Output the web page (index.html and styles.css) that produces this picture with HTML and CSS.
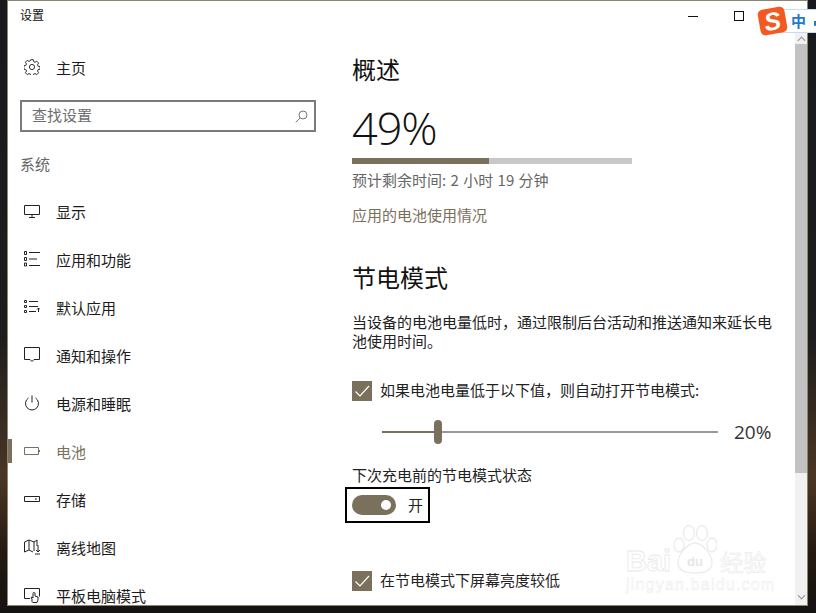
FILE: index.html
```html
<!DOCTYPE html>
<html lang="zh-CN">
<head>
<meta charset="utf-8">
<title>设置</title>
<link rel="stylesheet" href="styles.css">
</head>
<body>
<div class="window">
  <div class="titlebar">
    <span class="title">设置</span>
    <div class="controls">
      <span class="min"></span>
      <span class="max"></span>
    </div>
  </div>
  <div class="body">
    <aside class="side">
      <div class="nav home">
        <svg class="ic" viewBox="0 0 16 16"><g fill="none" stroke="#333" stroke-width="1"><circle cx="8" cy="8" r="2.6"/><path d="M6.700 .7h2.600l.4 2 1.300.6 1.800-1.100 1.800 1.900-1.100 1.700.6 1.400 2 .4v2.600l-2 .4-.6 1.400 1.100 1.700-1.800 1.900-1.800-1.100-1.300.6-.4 2H6.700l-.4-2-1.300-.6-1.800 1.100-1.800-1.900 1.100-1.700-.6-1.400-2-.4V6.700l2-.4.6-1.400-1.100-1.700 1.800-1.900 1.800 1.100 1.300-.6z"/></g></svg>
        <span>主页</span>
      </div>
      <div class="search"><span class="search-text">查找设置</span>
        <svg class="mag" viewBox="0 0 13 13"><g fill="none" stroke="#777" stroke-width="1"><circle cx="8" cy="5" r="4"/><path d="M5 8 .8 12.300"/></g></svg>
      </div>
      <div class="group">系统</div>
      <div class="nav">
        <svg class="ic" viewBox="0 0 16 16"><g fill="none" stroke="#222"><path d="M.5 2.500h15v9H.5zM8 11.500v3M5 14.500h6"/></g></svg>
        <span>显示</span>
      </div>
      <div class="nav">
        <svg class="ic" viewBox="0 0 16 16"><g fill="none" stroke="#222"><path d="M.5.5h2v3h-2zM.5 6.500h2v3h-2zM.5 12h2v3h-2zM5 1.500h11M5 8h8M5 14.500h11"/></g></svg>
        <span>应用和功能</span>
      </div>
      <div class="nav">
        <svg class="ic" viewBox="0 0 16 16"><g fill="none" stroke="#222"><path d="M.5 1.500h2v2h-2zM.5 6.500h2v2h-2zM.5 11.500h2v2h-2zM5 2.500h9M5 7.500h9M5 12.500h7M14.500 13V9M13 10.500l1.500-1.500 1.500 1.500"/></g></svg>
        <span>默认应用</span>
      </div>
      <div class="nav">
        <svg class="ic" viewBox="0 0 16 16"><g fill="none" stroke="#222"><path d="M.5.5h15v12H10l-2 2-2-2H.5z"/></g></svg>
        <span>通知和操作</span>
      </div>
      <div class="nav">
        <svg class="ic" viewBox="0 0 16 16"><g fill="none" stroke="#222"><path d="M8 .5v7M4.500 3a6.500 6.500 0 1 0 7 0"/></g></svg>
        <span>电源和睡眠</span>
      </div>
      <div class="nav active">
        <svg class="ic" viewBox="0 0 16 16"><g fill="none" stroke="#7b705c"><path d="M.5 4.500h14v7H.5zM15.500 7v2"/></g></svg>
        <span>电池</span>
      </div>
      <div class="nav">
        <svg class="ic" viewBox="0 0 16 16"><g fill="none" stroke="#222"><path d="M.5 5.500h15v5H.5zM11 8h2"/></g></svg>
        <span>存储</span>
      </div>
      <div class="nav">
        <svg class="ic" viewBox="0 0 16 16"><g fill="none" stroke="#222"><path d="M.5 3 5 1l5 2 3-2v6M.5 3v10L5 11l4 2M5 1v10M10 3v9M14 6v7M12 11l2 2 2-2M11 15h5"/></g></svg>
        <span>离线地图</span>
      </div>
      <div class="nav">
        <svg class="ic" viewBox="0 0 16 16"><g fill="none" stroke="#222"><path d="M6 11.500H.5v-10h15v8M8 15v-3L7 10.500l1-.5 1 1V6.500a1 1 0 0 1 2 0V9l3 1v3l-1 2.500H8.500"/></g></svg>
        <span>平板电脑模式</span>
      </div>
    </aside>
    <main class="content">
      <h2 class="h-first">概述</h2>
      <div class="pct">49%</div>
      <div class="bar"><div class="bar-fill" style="width:49%"></div></div>
      <p class="meta">预计剩余时间: 2 小时 19 分钟</p>
      <p class="link">应用的电池使用情况</p>
      <h2 class="h-second">节电模式</h2>
      <p class="desc">当设备的电池电量低时，通过限制后台活动和推送通知来延长电池使用时间。</p>
      <div class="check first-check"><span class="box"><svg viewBox="0 0 20 20"><path d="M3.500 10.500 8 15l9-10" fill="none" stroke="#fff" stroke-width="1.200"/></svg></span><span class="check-text">如果电池电量低于以下值，则自动打开节电模式:</span></div>
      <div class="slider-row">
        <div class="slider"><div class="track-on"></div><div class="thumb"></div><div class="track-off"></div></div>
        <span class="sval">20%</span>
      </div>
      <p class="state">下次充电前的节电模式状态</p>
      <div class="toggle-focus"><span class="toggle"><span class="dot"></span></span><span>开</span></div>
      <div class="check last-check"><span class="box"><svg viewBox="0 0 20 20"><path d="M3.500 10.500 8 15l9-10" fill="none" stroke="#fff" stroke-width="1.200"/></svg></span><span class="check-text">在节电模式下屏幕亮度较低</span></div>
    </main>
    <div class="scroll">
      <svg class="arrow" viewBox="0 0 10 6"><path d="M1 5l4-4 4 4" fill="none" stroke="#999" stroke-width="1.300"/></svg>
      <div class="thumb-v"></div>
      <svg class="arrow arrow-down" viewBox="0 0 10 6"><path d="M1 1l4 4 4-4" fill="none" stroke="#999" stroke-width="1.300"/></svg>
    </div>
  </div>
</div>
<div class="ime">
  <span class="ime-logo">S</span>
  <span class="ime-zh">中</span>
  <span class="ime-next"></span>
</div>
<div class="wm">
  <div class="wm-top"><span class="wm-bai">Bai</span><svg class="wm-paw" viewBox="0 0 44 50"><g fill="#fff" stroke="#ececec" stroke-width="1.300"><ellipse cx="16" cy="8" rx="5.500" ry="7.500"/><ellipse cx="29" cy="8" rx="5.500" ry="7.500"/><ellipse cx="6" cy="20" rx="5" ry="7"/><ellipse cx="39" cy="20" rx="5" ry="7"/><path d="M22 18c7 0 17 11 17 20 0 8-9 10-17 10S5 46 5 38c0-9 10-20 17-20z"/></g><text x="22" y="41" text-anchor="middle" class="wm-du">du</text></svg><span class="wm-zh">经验</span></div>
  <div class="wm-url">jingyan.baidu.com</div>
</div>
</body>
</html>
```
FILE: styles.css
```css
* { box-sizing: border-box; }
html, body { margin: 0; height: 100%; }
body {
  width: 816px; height: 613px; overflow: hidden; position: relative;
  background: linear-gradient(180deg, #17191d 0%, #1e1d1d 55%, #4a3624 78%, #241a12 90%, #141210 100%);
  font-family: "Noto Sans CJK SC", "Liberation Sans", sans-serif;
  color: #222; font-size: 15px; line-height: 20px;
}
.window {
  width: 801px; height: 606px; margin-left: 7px;
  background: #fff; border: 1px solid #8c8570;
  display: flex; flex-direction: column; overflow: hidden;
}
.titlebar { height: 32px; flex: none; display: flex; justify-content: space-between; align-items: center; padding-left: 12px; }
.title { font-size: 12px; color: #111; margin-top: -4px; }
.controls { display: flex; align-items: center; gap: 36px; margin-right: 63px; margin-top: -2px; }
.min { width: 10px; height: 1px; background: #111; }
.max { width: 10px; height: 10px; border: 1px solid #111; }
.body { flex: 1; display: flex; min-height: 0; }
.side { width: 337px; flex: none; padding: 10px 0 0 12px; overflow: hidden; }
.nav { height: 48px; display: flex; align-items: center; gap: 16px; padding-left: 4px; font-size: 15px; color: #1c1c1c; position: relative; flex: none; }
.nav .ic { width: 16px; height: 16px; flex: none; }
.nav span { padding-top: 2px; }
.active { color: #7b705c; }
.active::before { content: ""; position: absolute; left: -12px; top: 12px; width: 4px; height: 24px; background: #7b705c; }
.search {
  width: 296px; height: 32px; border: 2px solid #7a7a7a; margin-top: 9px;
  display: flex; justify-content: space-between; align-items: center; padding: 0 6px 0 10px;
  color: #6e6e6e;
}
.search-text { margin-top: -2px; }
.mag { width: 13px; height: 13px; }
.group { color: #666; margin-top: 22px; margin-bottom: 13px; }
.content { flex: 1; padding: 0 0 0 7px; min-width: 0; overflow: hidden; }
h2 { font-weight: 400; font-size: 24px; margin: 0; line-height: 34px; color: #111; }
.h-first { margin-top: 19px; }
.pct { font-family: "Open Sans", "Liberation Sans", sans-serif; font-weight: 300; font-size: 45px; line-height: 56px; color: #111; margin-top: 14px; letter-spacing: -1px; }
.bar { width: 280px; height: 6px; background: #c8c8c8; margin-top: 2px; }
.bar-fill { height: 6px; background: #7b705c; }
p { margin: 0; }
.meta { color: #666; margin-top: 6px; word-spacing: 1px; }
.link { color: #7b705c; margin-top: 15px; }
.h-second { margin-top: 35px; }
.desc { width: 424px; margin-top: 18px; color: #222; line-height: 19px; }
.check { display: flex; align-items: center; gap: 8px; color: #222; }
.check-text { margin-top: -2px; }
.first-check { margin-top: 31px; }
.box { width: 20px; height: 20px; background: #7b705c; display: block; flex: none; }
.box svg { display: block; }
.slider-row { display: flex; align-items: center; margin-top: 19px; padding-left: 30px; height: 24px; }
.slider { width: 336px; display: flex; align-items: center; }
.track-on { width: 52px; height: 2px; background: #7b705c; }
.thumb { width: 8px; height: 24px; background: #7b705c; border-radius: 4px; }
.track-off { flex: 1; height: 2px; background: #999; }
.sval { font-size: 19px; font-family: "Open Sans", "Liberation Sans", sans-serif; margin-left: 16px; color: #333; }
.state { margin-top: 21px; color: #222; }
.toggle-focus {
  width: 85px; height: 36px; border: 2px solid #000; margin: 2px 0 0 -7px;
  display: flex; align-items: center; gap: 12px; padding-left: 5px;
}
.toggle { width: 44px; height: 20px; border-radius: 10px; background: #7b705c; display: flex; align-items: center; justify-content: flex-end; padding-right: 5px; }
.dot { width: 10px; height: 10px; border-radius: 50%; background: #fff; }
.last-check { margin-top: 48px; }
.scroll { width: 12px; flex: none; background: #f1f1f1; position: relative; display: flex; flex-direction: column; align-items: center; }
.arrow { width: 9px; height: 6px; margin-top: 3px; flex: none; }
.thumb-v { width: 100%; height: 429px; background: #c2c2c2; margin-top: 2px; flex: none; }
.arrow-down { margin-top: auto; margin-bottom: 5px; }
.ime {
  position: absolute; left: 766px; top: 9px; width: 50px; height: 24px;
  background: #fff; border: 1px solid #c9dbee; border-right: 0; overflow: visible; display: flex; align-items: center;
}
.ime-logo {
  position: absolute; left: -8px; top: -2px; width: 27px; height: 26px; background: #f25a1f; border-radius: 5px; transform: rotate(-10deg);
  color: #fff; font: italic 700 25px/26px "Liberation Sans", sans-serif; text-align: center;
}
.ime-zh { margin-left: 24px; color: #1f78d1; font-size: 15px; font-weight: 700; }
.ime-next { margin-left: 8px; margin-top: 5px; width: 2px; height: 5px; background: #1f78d1; border-radius: 0 0 1px 0; }
.wm { position: absolute; left: 626px; top: 525px; width: 150px; color: #eee; }
.wm-top { display: flex; align-items: flex-end; height: 50px; }
.wm-bai { font: 700 29px/28px "Liberation Sans", sans-serif; color: #fff; -webkit-text-stroke: .8px #e8e8e8; }
.wm-paw { width: 44px; height: 50px; margin-left: 2px; }
.wm-du { font: 700 13px "Liberation Sans", sans-serif; fill: #e6e6e6; stroke: none; }
.wm-zh { font-size: 23px; line-height: 28px; margin-left: 3px; color: #fff; -webkit-text-stroke: .5px #e6e6e6; }
.wm-url { font: 400 16px/18px "Liberation Sans", sans-serif; letter-spacing: 1.200px; margin-top: 1px; white-space: nowrap; color: #fff; -webkit-text-stroke: .5px #ececec; }
```
